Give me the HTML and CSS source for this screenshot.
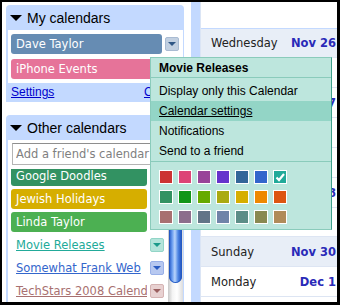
FILE: index.html
```html
<!DOCTYPE html>
<html lang="en">
<head>
  <meta charset="UTF-8" />
  <meta name="viewport" content="width=device-width, initial-scale=1.0"/>
  <title>Calendar list</title>
  <link rel="stylesheet" href="styles.css">
</head>
<body>

  <div class="screen">
    <aside class="sidebar">
      <section class="panel">
        <h3 class="panel-title"><span class="caret"></span>My calendars</h3>
        <div class="panel-body">
          <div class="cal-row">
            <span class="chip chip-slate">Dave Taylor</span>
            <span class="drop drop-slate"></span>
          </div>
          <div class="cal-row">
            <span class="chip chip-pink">iPhone Events</span>
            <span class="drop drop-pink"></span>
          </div>
        </div>
        <div class="panel-links">
          <a href="#">Settings</a>
          <a href="#">Create</a>
        </div>
      </section>

      <section class="panel panel-other">
        <h3 class="panel-title"><span class="caret"></span>Other calendars</h3>
        <div class="panel-body other-body">
          <input type="text" class="friend-input" placeholder="Add a friend's calendar" />
          <div class="cal-scroll">
            <div class="cal-list">
              <div class="cal-list-inner">
                <div class="cal-row">
                  <span class="chip chip-doodle">Google Doodles</span>
                  <span class="drop drop-doodle"></span>
                </div>
                <div class="cal-row">
                  <span class="chip chip-gold">Jewish Holidays</span>
                  <span class="drop drop-gold"></span>
                </div>
                <div class="cal-row">
                  <span class="chip chip-green">Linda Taylor</span>
                  <span class="drop drop-green"></span>
                </div>
                <div class="cal-row">
                  <a href="#" class="cal-link link-teal">Movie Releases</a>
                  <span class="drop drop-teal"></span>
                </div>
                <div class="cal-row">
                  <a href="#" class="cal-link link-blue">Somewhat Frank Web</a>
                  <span class="drop drop-blue"></span>
                </div>
                <div class="cal-row">
                  <a href="#" class="cal-link link-rose">TechStars 2008 Calendar</a>
                  <span class="drop drop-rose"></span>
                </div>
              </div>
            </div>
            <div class="scrollbar"><div class="thumb"></div></div>
          </div>
        </div>
      </section>
    </aside>

    <div class="gutter"></div>

    <main class="agenda">
      <div class="day shade"><span>Wednesday</span><b>Nov 26</b></div>
      <div class="day"></div>
      <div class="day"><span>Thursday</span><b>Nov 27</b></div>
      <div class="day"></div>
      <div class="day"></div>
      <div class="day"><span>Friday</span><b>Nov 28</b></div>
      <div class="day short"></div>
      <div class="day shade"><span>Sunday</span><b>Nov 30</b></div>
      <div class="day"><span>Monday</span><b>Dec 1</b></div>
    </main>

    <div class="menu">
      <div class="menu-head">Movie Releases</div>
      <ul class="menu-list">
        <li>Display only this Calendar</li>
        <li class="active">Calendar settings</li>
        <li>Notifications</li>
        <li>Send to a friend</li>
      </ul>
      <div class="swatches">
        <span class="sw" style="background:#cc3333"></span>
        <span class="sw" style="background:#dd4477"></span>
        <span class="sw" style="background:#994499"></span>
        <span class="sw" style="background:#6633cc"></span>
        <span class="sw" style="background:#336699"></span>
        <span class="sw" style="background:#3366cc"></span>
        <span class="sw" style="background:#22aa99">
          <svg width="12" height="12" viewBox="0 0 12 12"><polyline points="2.5,6.5 5,9 10,3" fill="none" stroke="#fff" stroke-width="2.2"/></svg>
        </span>
        <span class="sw" style="background:#329262"></span>
        <span class="sw" style="background:#109618"></span>
        <span class="sw" style="background:#66aa00"></span>
        <span class="sw" style="background:#aaaa11"></span>
        <span class="sw" style="background:#d6ae00"></span>
        <span class="sw" style="background:#ee8800"></span>
        <span class="sw" style="background:#dd5511"></span>
        <span class="sw" style="background:#a87070"></span>
        <span class="sw" style="background:#8c6d8c"></span>
        <span class="sw" style="background:#627487"></span>
        <span class="sw" style="background:#7083a8"></span>
        <span class="sw" style="background:#5c8d87"></span>
        <span class="sw" style="background:#898951"></span>
        <span class="sw" style="background:#b08b59"></span>
      </div>
    </div>
  </div>

</body>
</html>
```

FILE: styles.css
```css
* {
  box-sizing: border-box;
}

body {
  margin: 0;
  font-family: "Liberation Sans", Arial, sans-serif;
  color: #000;
}

.screen {
  position: relative;
  width: 340px;
  height: 305px;
  border: solid #000;
  border-width: 2px 3px 3px 2px;
  display: flex;
  background: #fff;
  overflow: hidden;
}

/* barra lateral */
.sidebar {
  width: 189px;
  padding: 3px 7px 0 4px;
  display: flex;
  flex-direction: column;
}

.panel {
  background: #c3d9ff;
  border-radius: 4px 4px 0 0;
}

.panel-title {
  margin: 0;
  height: 25px;
  display: flex;
  align-items: center;
  padding-left: 4px;
  font-size: 14px;
  font-weight: normal;
}

.caret {
  width: 0;
  height: 0;
  border-left: 6px solid transparent;
  border-right: 6px solid transparent;
  border-top: 6px solid #000;
  margin-right: 5px;
}

.panel-body {
  background: #fff;
  margin: 0 1px 0 2px;
  padding: 4px 0 4px 3px;
  display: flex;
  flex-direction: column;
  gap: 5px;
}

.cal-row {
  display: flex;
  align-items: center;
  height: 20px;
}

.chip {
  flex: 1;
  min-width: 0;
  height: 20px;
  line-height: 20px;
  padding-left: 5px;
  border-radius: 3px;
  color: #fff;
  font-family: "DejaVu Sans", Verdana, sans-serif;
  font-size: 11.5px;
  white-space: nowrap;
  overflow: hidden;
}

.chip-slate { background: #668cb3; }
.chip-pink { background: #e67399; }
.chip-doodle { background: #329262; }
.chip-gold { background: #d6ae00; }
.chip-green { background: #4cb052; }

.drop {
  width: 14px;
  height: 14px;
  margin: 0 4px 0 3px;
  border: 1px solid;
  border-radius: 2px;
  display: flex;
  align-items: center;
  justify-content: center;
  flex-shrink: 0;
}

.drop::after {
  content: "";
  border-left: 4px solid transparent;
  border-right: 4px solid transparent;
  border-top: 4px solid currentColor;
}

.drop-slate { background: #c2d0e1; border-color: #a9bbd2; color: #2f5685; }
.drop-pink { background: #f5c6d6; border-color: #eaa6bd; color: #c43c6a; }
.drop-doodle { background: #b5dbc7; border-color: #93c8ad; color: #256e49; }
.drop-gold { background: #efe0a0; border-color: #e2cd70; color: #8a7000; }
.drop-green { background: #c0e5c2; border-color: #9bd39e; color: #2d7b31; }
.drop-teal { background: #b3e4da; border-color: #92d5c7; color: #1a9a8a; }
.drop-blue { background: #b7c8f0; border-color: #99b0e8; color: #2a5bc2; }
.drop-rose { background: #e8d1d1; border-color: #d5b3b3; color: #9a5f5f; }

.panel-links {
  display: flex;
  justify-content: space-between;
  height: 19px;
  line-height: 19px;
  padding: 0 4px 0 5px;
  font-size: 12px;
}

.panel-links a {
  color: #0000cc;
}

.panel-other {
  margin-top: 13px;
  flex: 1;
  display: flex;
  flex-direction: column;
}

.other-body {
  flex: 1;
  padding: 3px 0 0 0;
  gap: 0;
}

.friend-input {
  height: 22px;
  margin: 0 3px 0 4px;
  padding: 0 3px;
  border: 1px solid #b4b4b4;
  border-top-color: #8e8e8e;
  font-family: "DejaVu Sans", Verdana, sans-serif;
  font-size: 11.5px;
}

.friend-input::placeholder {
  color: #808080;
}

.cal-scroll {
  display: flex;
  flex: 1;
  margin-top: 4px;
  min-height: 0;
}

.cal-list {
  flex: 1;
  overflow: hidden;
  padding-left: 3px;
}

.cal-list-inner {
  margin-top: -3px;
  display: flex;
  flex-direction: column;
  gap: 3px;
}

.cal-link {
  flex: 1;
  min-width: 0;
  padding-left: 5px;
  font-family: "DejaVu Sans", Verdana, sans-serif;
  font-size: 11.5px;
  white-space: nowrap;
  overflow: hidden;
}

.link-teal { color: #22aa99; }
.link-blue { color: #3366cc; }
.link-rose { color: #a87070; }

.scrollbar {
  width: 15px;
  background: linear-gradient(to right, #c8c8c8, #f4f4f4 30%, #ffffff 60%, #dcdcdc);
  padding: 0 1px;
}

.thumb {
  height: 114px;
  border-radius: 0 0 7px 7px;
  background: linear-gradient(to right, #1d52c4, #6d9ff0 25%, #b9d4fb 45%, #4e86e4 70%, #1849b8);
  box-shadow: inset 0 0 0 1px #2459c2;
}

.gutter {
  width: 10px;
  background: #c3d9ff;
  border-right: 1px solid #dbe5f5;
}

/* agenda */
.agenda {
  flex: 1;
  padding-top: 26px;
  font-family: "DejaVu Sans", Verdana, sans-serif;
  font-size: 11.5px;
  color: #222;
}

.day {
  height: 30px;
  display: flex;
  justify-content: space-between;
  align-items: center;
  padding: 0 1px 0 10px;
  border-bottom: 1px solid #dde5f3;
  white-space: nowrap;
}

.day:first-child {
  height: 30px;
  border-top: 1px solid #c3d9ff;
}

.day.short {
  height: 29px;
}

.day.shade {
  background: #e8eef7;
}

.day b {
  color: #2a2ab8;
}

/* menu do calendario */
.menu {
  position: absolute;
  left: 148px;
  top: 55px;
  width: 182px;
  background: #bde6dd;
  border: 1px solid #8acbbb;
  border-right-color: #3f9f8b;
  font-size: 12px;
  z-index: 2;
}

.menu-head {
  height: 20px;
  line-height: 20px;
  padding-left: 8px;
  font-weight: bold;
  border-bottom: 1px solid #8acbbb;
}

.menu-list {
  list-style: none;
  margin: 0;
  padding: 3px 0 0;
  border-bottom: 1px solid #8acbbb;
}

.menu-list li {
  height: 20px;
  line-height: 20px;
  padding-left: 8px;
}

.menu-list li.active {
  background: #93d5c6;
  text-decoration: underline;
}

.swatches {
  display: grid;
  grid-template-columns: repeat(7, 14px);
  gap: 6px 5px;
  padding: 8px 8px 5px;
}

.sw {
  width: 14px;
  height: 14px;
  border: 1px solid #fff;
  display: flex;
  align-items: center;
  justify-content: center;
}
```
